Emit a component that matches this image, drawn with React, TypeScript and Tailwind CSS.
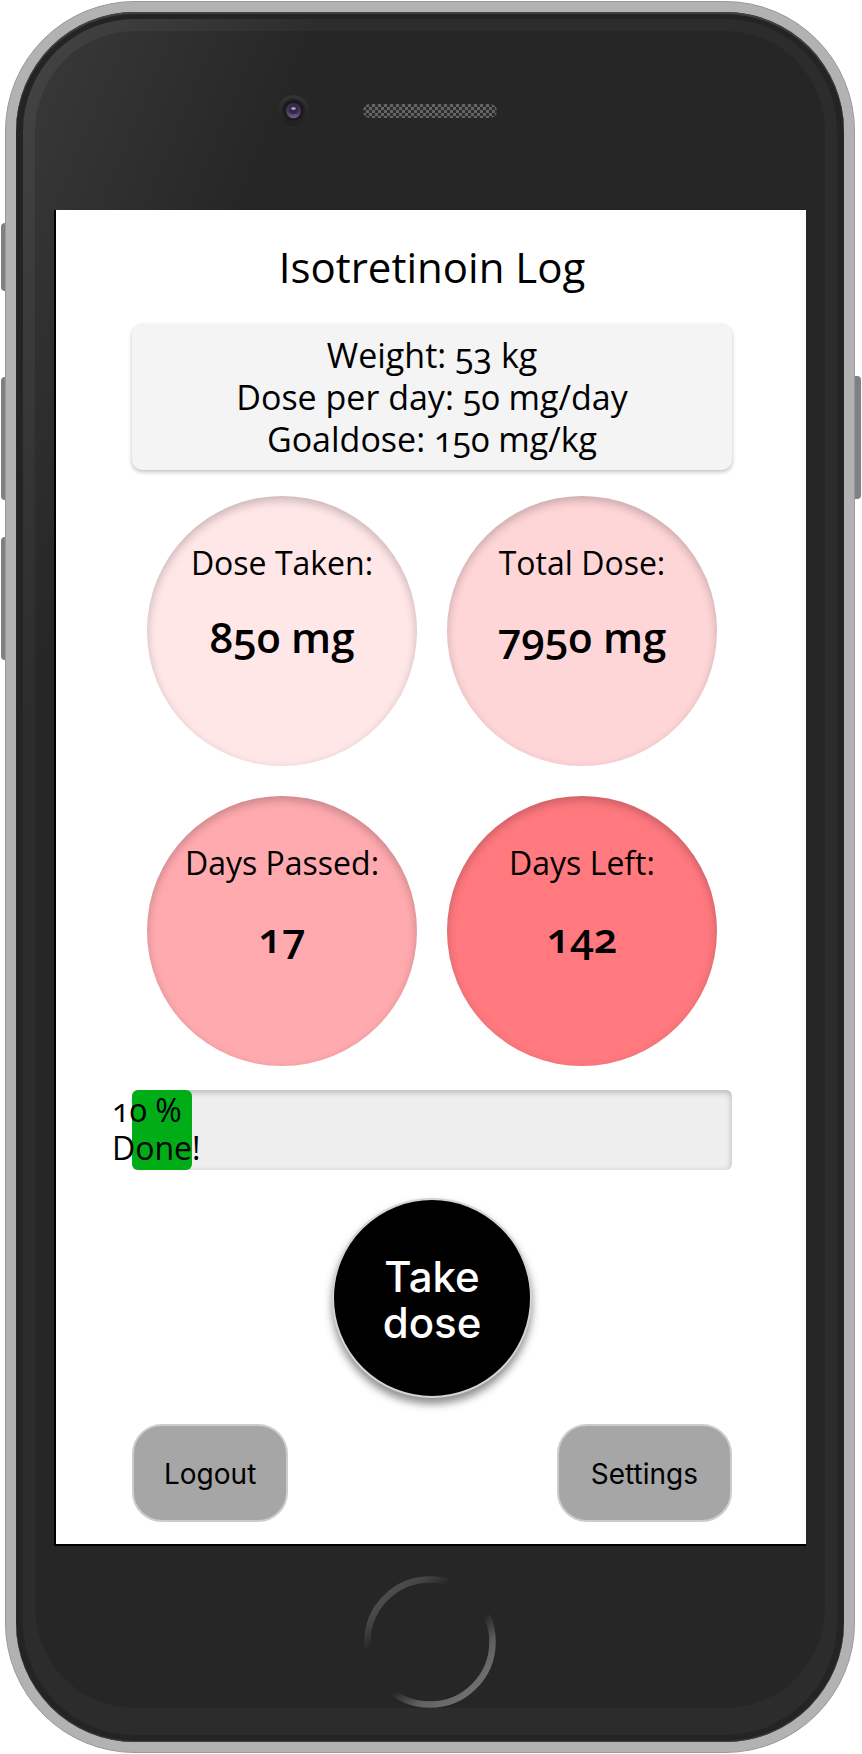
import { useState } from "react";

const stats = [
  { label: "Dose Taken:", value: "850 mg", fill: "bg-[#ffe6e7]" },
  { label: "Total Dose:", value: "7950 mg", fill: "bg-[#ffd6d8]" },
  { label: "Days Passed:", value: "17", fill: "bg-[#ffaaaf]" },
  { label: "Days Left:", value: "142", fill: "bg-[#ff797f]" },
];

function Earpiece() {
  return (
    <div className="grid grid-cols-[1fr_auto_1fr] items-center pt-16 pb-[84px]">
      <svg className="mr-[54px] justify-self-end" width="31" height="31" viewBox="0 0 31 31" aria-hidden="true">
        <defs>
          <linearGradient id="rim" x1="0" y1="0" x2="0" y2="1">
            <stop offset="0" stopColor="#343434" />
            <stop offset="1" stopColor="#202020" />
          </linearGradient>
          <linearGradient id="lens" x1="0" y1="0" x2="0" y2="1">
            <stop offset="0" stopColor="#35264a" />
            <stop offset="0.6" stopColor="#46355c" />
            <stop offset="1" stopColor="#75638c" />
          </linearGradient>
        </defs>
        <circle cx="15.5" cy="15.5" r="15.5" fill="url(#rim)" />
        <circle cx="15.5" cy="15.5" r="12" fill="#222222" />
        <circle cx="15.5" cy="15.5" r="10" fill="#191919" />
        <circle cx="15.5" cy="15.5" r="7.7" fill="url(#lens)" />
        <circle cx="15.5" cy="15" r="4" fill="#33283f" />
        <ellipse cx="15.5" cy="13.5" rx="2.3" ry="1.3" fill="#b9b4c2" />
      </svg>
      <div className="h-[14px] w-[134px] rounded-full bg-[repeating-conic-gradient(#646464_0_25%,#2c2c2c_0_50%)] bg-[length:6px_6px]" />
      <span />
    </div>
  );
}

function HomeButton() {
  return (
    <button type="button" aria-label="Home" className="mx-auto mt-[30px] mb-[15px] block rounded-full">
      <svg width="132" height="132" viewBox="0 0 132 132" aria-hidden="true">
        <defs>
          <linearGradient id="homeRing" x1="0.18" y1="0.117" x2="0.82" y2="0.883">
            <stop offset="0" stopColor="#4c4c4c" />
            <stop offset="0.08" stopColor="#444444" />
            <stop offset="0.23" stopColor="#262626" />
            <stop offset="0.62" stopColor="#262626" />
            <stop offset="0.82" stopColor="#606060" />
            <stop offset="1" stopColor="#6e6e6e" />
          </linearGradient>
        </defs>
        <circle cx="66" cy="66" r="62.5" fill="none" stroke="url(#homeRing)" strokeWidth="6.5" />
      </svg>
    </button>
  );
}

export default function App() {
  const [taken] = useState(10);

  return (
    <main className="relative bg-white pt-px pr-[7px] pb-px pl-[5px] font-['Open_Sans',sans-serif] text-black [font-variant-numeric:oldstyle-nums]">
      <span className="absolute top-[223px] left-px h-[68px] w-[6px] rounded-l bg-[#7f8086]" />
      <span className="absolute top-[377px] left-px h-[123px] w-[6px] rounded-l bg-[#7f8086]" />
      <span className="absolute top-[537px] left-px h-[123px] w-[6px] rounded-l bg-[#7f8086]" />
      <span className="absolute top-[376px] right-px h-[123px] w-[8px] rounded-r bg-[#7f8086]" />

      <div className="relative rounded-[130px] border border-[#999999] bg-[#b2b2b2] p-[10px]">
        <div className="rounded-[119px] bg-[#242424] p-[7px] shadow-[inset_0_2px_1px_#444444,inset_0_-1px_1px_#444444]">
          <div className="rounded-[112px] bg-[linear-gradient(113deg,#454545_0px,#2c2c2c_280px)] p-3">
            <div className="rounded-[100px] bg-[linear-gradient(113deg,#393939_0px,#262626_260px)] px-[19px]">
              <Earpiece />

              <section className="border-b-2 border-l-2 border-black bg-white pt-7 pr-[74px] pb-[22px] pl-[76px]">
                <h1 className="text-center text-[42px] leading-[58px]">Isotretinoin Log</h1>

                <div className="mt-7 rounded-[10px] bg-[#f4f4f4] py-[10px] text-center text-[34px] leading-[42px] shadow-[0_2px_4px_rgba(0,0,0,0.25)]">
                  <p>Weight: 53 kg</p>
                  <p>Dose per day: 50 mg/day</p>
                  <p>Goaldose: 150 mg/kg</p>
                </div>

                <div className="mt-[26px] grid grid-cols-[270px_270px] justify-center gap-[30px]">
                  {stats.map((s) => (
                    <div
                      key={s.label}
                      className={`h-[270px] rounded-full pt-[47px] text-center shadow-[inset_0_4px_10px_rgba(0,0,0,0.22)] ${s.fill}`}
                    >
                      <p className="text-[32px] leading-[40px]">{s.label}</p>
                      <p className="mt-[26px] text-[42px] leading-[56px] font-semibold">{s.value}</p>
                    </div>
                  ))}
                </div>

                <div className="mt-6 h-20 rounded-[6px] bg-[#eeeeee] shadow-[inset_0_2px_6px_rgba(0,0,0,0.25)]">
                  <div
                    role="progressbar"
                    aria-label="Treatment progress"
                    aria-valuenow={taken}
                    className="h-full rounded-[6px] bg-[#00ad17]"
                    style={{ width: `${taken}%` }}
                  >
                    <p className="-ml-5 w-[110px] pt-px text-[32px] leading-[38px]">{`${taken} % Done!`}</p>
                  </div>
                </div>

                <button
                  type="button"
                  className="mx-auto mt-7 block size-[200px] rounded-full border-2 border-[#d4d4d4] bg-black px-8 pt-[3px] font-['Inter',sans-serif] text-[42px] leading-[46px] font-medium text-white shadow-[0_6px_8px_rgba(0,0,0,0.45)]"
                >
                  Take dose
                </button>

                <div className="mt-[26px] flex justify-between font-['Inter',sans-serif] text-[28px] leading-[34px]">
                  <button type="button" className="rounded-[30px] border-2 border-[#cccccc] bg-[#a6a6a6] px-[30px] pt-[31px] pb-[29px]">
                    Logout
                  </button>
                  <button type="button" className="rounded-[30px] border-2 border-[#cccccc] bg-[#a6a6a6] px-8 pt-[31px] pb-[29px]">
                    Settings
                  </button>
                </div>
              </section>

              <HomeButton />
            </div>
          </div>
        </div>
      </div>
    </main>
  );
}
